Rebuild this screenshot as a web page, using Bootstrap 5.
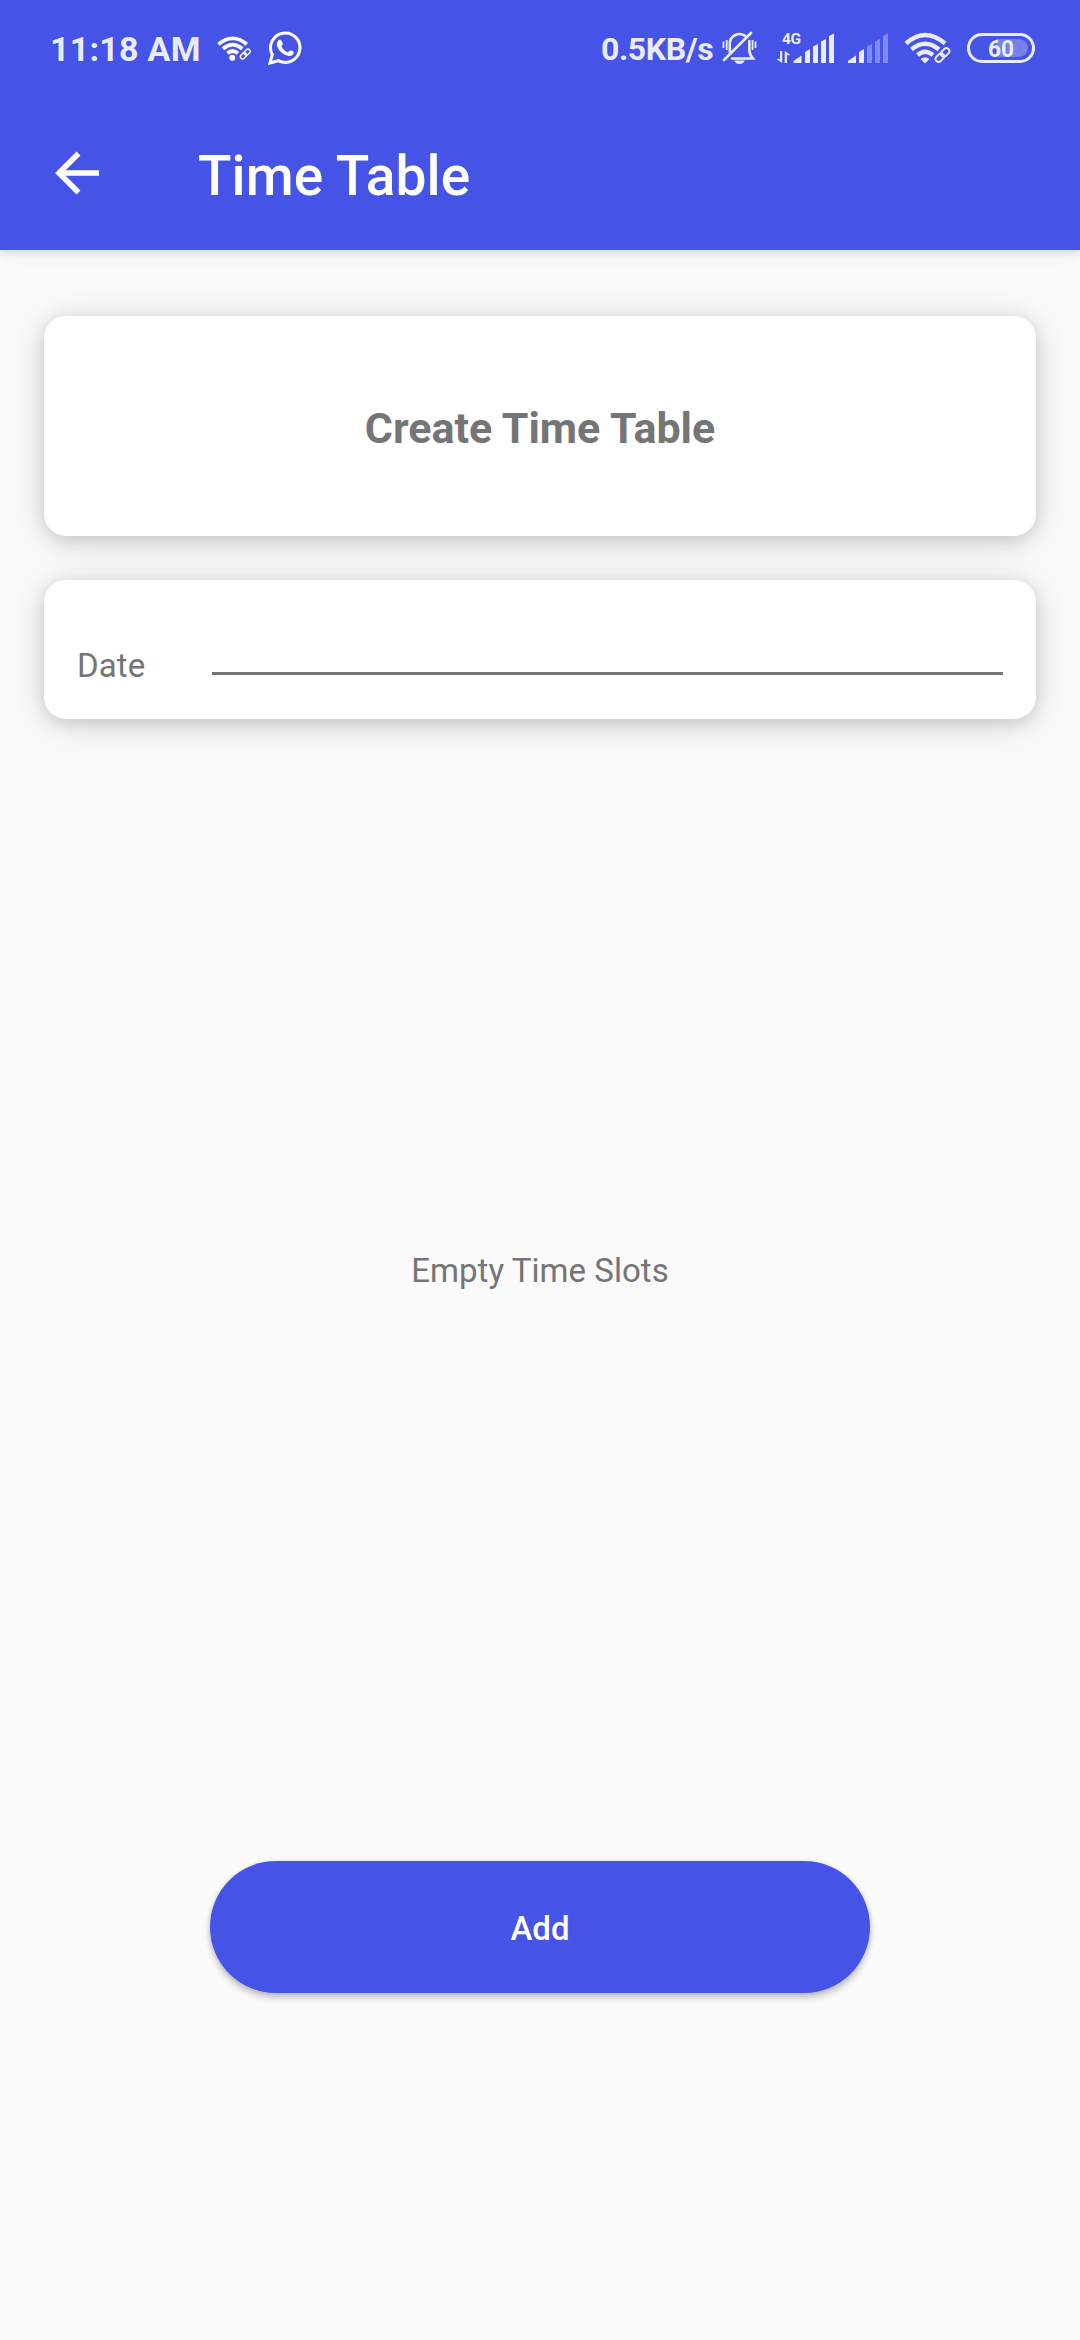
<!DOCTYPE html>
<html lang="en">
<head>
<meta charset="utf-8">
<meta name="viewport" content="width=device-width, initial-scale=1">
<title>Time Table</title>
<link rel="stylesheet" href="https://cdn.jsdelivr.net/npm/bootstrap@5.3.0/dist/css/bootstrap.min.css">
<style>
body{font-family:Roboto,"Liberation Sans",sans-serif;background:#fafafa;color:#757575;height:2340px;overflow:hidden}
.app-head{background:#4553e6;height:250px;box-shadow:0 2px 8px rgba(0,0,0,.14),0 6px 22px rgba(0,0,0,.04)}
.status-bar{height:96px;padding:0 45px 0 50px;color:#eaebfd}
.status-bar svg{display:block;flex:none}
.clock{width:167px;font-size:34px;letter-spacing:.25px;line-height:1;padding-top:2px}
.net-speed{width:121px;font-size:32px;letter-spacing:-.4px;line-height:1;padding-top:2px}
.app-bar{height:154px;padding:0 0 0 49px}
.back-btn{width:60px;height:60px}
.app-title{font-size:55px;font-weight:500;line-height:1;letter-spacing:.1px;margin-left:89px;padding-top:7px}
.main-area{padding:66px 44px 0}
.panel{border:0;border-radius:22px;background:#fff;box-shadow:0 5px 18px rgba(0,0,0,.15),0 4px 44px rgba(0,0,0,.11)}
.panel-title{height:220px;margin-bottom:44px}
.panel-title h1{font-size:43px;letter-spacing:0;padding-top:5px;line-height:1}
.panel-date{height:139px;padding:35px 33px 0 33px}
.panel-date label{width:135px;font-size:33px;letter-spacing:.1px;line-height:1;padding-top:34px}
.date-line{border:0;border-bottom:3px solid #757575;border-radius:0;height:60px;background:transparent;padding:0}
.empty-note{height:1142px;font-size:33px;letter-spacing:.05px;line-height:1;padding-bottom:40px}
.btn.add-btn{width:660px;height:132px;font-size:33px;font-weight:500;letter-spacing:0;line-height:1;background:#4553e6;color:#fff;border:0;padding-top:9px;box-shadow:0 5px 7px rgba(0,0,0,.2),0 1px 5px rgba(0,0,0,.13)}
</style>
<script src="https://cdn.jsdelivr.net/npm/bootstrap@5.3.0/dist/js/bootstrap.bundle.min.js"></script>
</head>
<body class="d-flex flex-column">
<header class="app-head flex-shrink-0 position-relative">
  <div class="status-bar d-flex align-items-center fw-bold">
    <span class="clock text-nowrap">11:18 AM</span>
    <!-- linked wifi -->
    <svg width="35" height="26" viewBox="0 0 47 34" fill="none" stroke="#fff" stroke-width="5">
      <path d="M2 12Q21-4 40 12M8 18Q21 7 34 18M14 24Q21 18 28 24"/><circle cx="20.500" cy="30" r="4" fill="#fff" stroke="none"/>
      <g transform="rotate(-45 38 25)" stroke-width="2"><rect x="30" y="22" width="9" height="6" rx="3"/><rect x="37" y="22" width="9" height="6" rx="3"/></g>
    </svg>
    <!-- whatsapp -->
    <svg class="ms-3" width="34" height="34" viewBox="0 0 34 34">
      <path d="M2 32L4.300 23.600A14.700 14.700 0 1 1 10.400 29.700Z" fill="none" stroke="#fff" stroke-width="3"/>
      <path d="M11 9C12.500 8.300 13.300 9 13.700 10.200L14.800 12.800C15 14 13.700 14.700 13.400 15.500C15 18.700 17.200 20.300 20 21.300C21 20.900 21.500 19.200 22.500 19.200L25.800 20.800C26 23.400 24 25.200 21.200 25.100C15 24.500 9.600 18.900 8.800 13.800C8.700 11.800 9.600 9.700 11 9Z" fill="#fff"/>
    </svg>
    <span class="net-speed ms-auto text-nowrap">0.5KB/s</span>
    <!-- muted vibrating bell -->
    <svg width="35" height="34" viewBox="0 0 35 34" fill="none" stroke="#eaebfd" stroke-width="2.600">
      <path d="M7.800 21V13A9.700 9.700 0 0 1 23 4.800M27.300 10V19Q27.300 23 31 27.500H10M2 29L29 2" stroke-linecap="round"/>
      <path d="M1.500 10.500V17M4.700 9V19M30.500 9V19M33.500 10.500V17" stroke-width="1.800"/>
      <path d="M12 29.500H23Q21 33 17.500 33T12 29.500" fill="#eaebfd" stroke="none"/>
    </svg>
    <!-- 4G signal -->
    <svg width="58" height="34" viewBox="0 0 58 34" style="margin-left:20px" fill="#eaebfd">
      <text x="5" y="12.500" font-family="Roboto" font-size="15.500" font-weight="700" textLength="19">4G</text>
      <path d="M3 20H5.200V32L0 28.500L1 27.500L3 28.500ZM7.700 32V20L13 23.500L12 24.800L10 23.500V32Z"/>
      <path d="M16.500 32V30L24.500 24.500V32ZM28 32V21L33 18V32ZM36 32V15.500L41 13V32ZM44 32V10.500L49 8V32ZM52 32V5L57 2.500V32Z"/>
    </svg>
    <svg width="41" height="34" viewBox="0 0 41 34" style="margin-left:13px" fill="#eaebfd">
      <path d="M0 32V30L8 24.500V32ZM11 32V21L16 18V32Z"/>
      <path d="M19 32V15.500L24 13V32ZM27 32V10.500L32 8V32ZM35 32V5L40 2.500V32Z" fill="#818af1"/>
    </svg>
    <svg width="47" height="32" viewBox="0 0 47 32" style="margin-left:15px" fill="none" stroke="#eaebfd" stroke-width="4.500">
      <path d="M2 11.500Q21-5.500 41 11.500M7.500 17.500Q21 6 35 17.500M13.500 23Q21 16.500 29 23"/><path d="M16.500 27Q21 23.500 25.500 27L21 31.500Z" fill="#eaebfd" stroke="none"/>
      <g transform="rotate(-45 38.500 23)" stroke-width="1.900"><rect x="30" y="20" width="9.500" height="6" rx="3"/><rect x="37.500" y="20" width="9.500" height="6" rx="3"/></g>
    </svg>
    <svg width="68" height="30" viewBox="0 0 68 30" style="margin-left:16px">
      <path d="M29 6H52A9 9 0 0 1 52 24H29Z" fill="#7781ee"/>
      <rect x="1.500" y="1.500" width="65" height="27" rx="13.500" fill="none" stroke="#eaebfd" stroke-width="3"/>
      <text x="21" y="23.500" font-family="Roboto" font-size="24" font-weight="700" fill="#eaebfd" textLength="26" lengthAdjust="spacingAndGlyphs">60</text>
    </svg>
  </div>
  <nav class="app-bar d-flex align-items-center">
    <a class="back-btn d-flex align-items-center" href="#" aria-label="Back">
      <svg width="60" height="60" viewBox="0 0 60 60" fill="none" stroke="#fff" stroke-width="5.500"><path d="M50 30H12M29.500 10.500L10 30L29.500 49.500"/></svg>
    </a>
    <span class="app-title text-white text-nowrap">Time Table</span>
  </nav>
</header>
<main class="main-area d-flex flex-column">
  <section class="card panel panel-title d-flex align-items-center justify-content-center"><h1 class="fw-bold m-0">Create Time Table</h1></section>
  <section class="card panel panel-date d-flex flex-row align-items-start">
    <label for="date">Date</label><input id="date" class="date-line flex-grow-1" readonly>
  </section>
  <div class="empty-note d-flex align-items-center justify-content-center">Empty Time Slots</div>
  <button class="btn add-btn rounded-pill align-self-center" type="button">Add</button>
</main>
</body>
</html>
